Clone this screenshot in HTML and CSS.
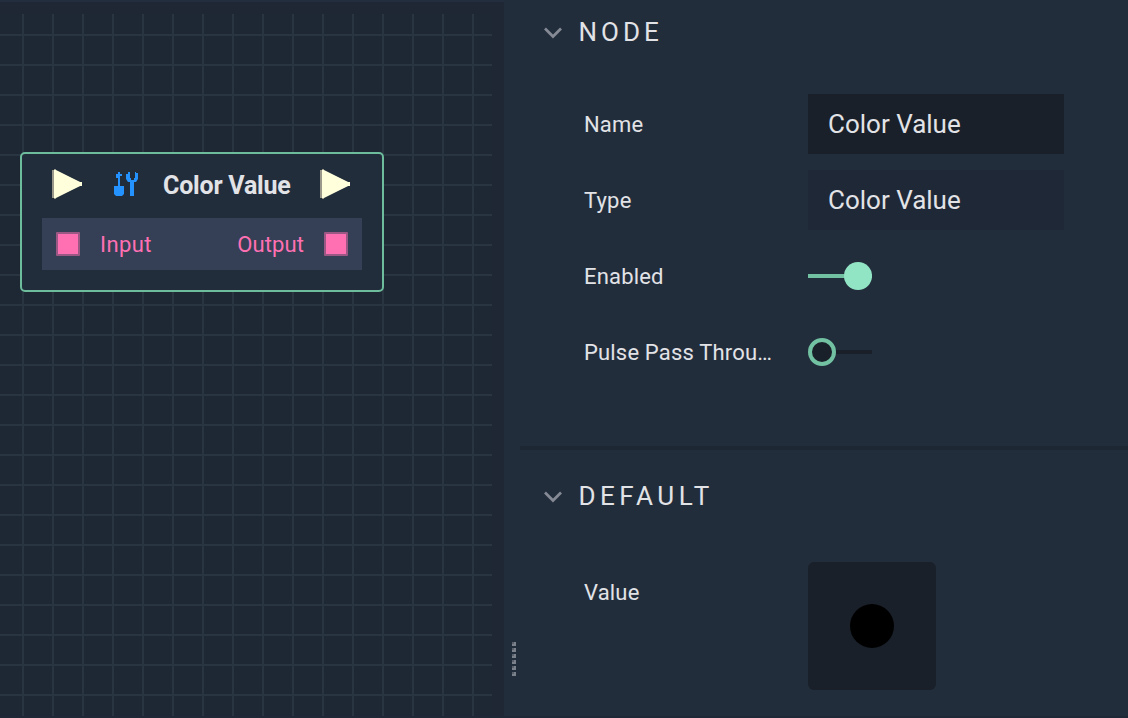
FILE: index.html
```html
<!DOCTYPE html>
<html lang="en">
<head>
<meta charset="utf-8">
<title>Node Editor</title>
<link rel="stylesheet" href="styles.css">
</head>
<body>
<main class="editor">
  <section class="graph">
    <div class="grid">
      <article class="node">
        <header class="node-header">
          <svg class="pulse" width="30" height="32" viewBox="0 0 30 32"><path fill="#99988a" d="M0 2h2V1h2v2l24 11h2v4h-2L4 29v2H2v-1H0z"/><path fill="#ffffdc" d="M2 2h2l24 12h2v4h-2L4 30H2z"/></svg>
          <svg class="tools" width="24" height="24" viewBox="0 0 24 24" fill="#2492ff"><path d="M4 0h2v2h2v2H6v10h4v8l-2 2H2l-2-2v-8h4V6H2V2h2z"/><path d="M14 0h2v6h1v2h3V6h1V0h1v1h2v6l-2 3h-2v14h-4V10h-2l-2-3V2h2z"/></svg>
          <span class="node-title">Color Value</span>
          <svg class="pulse" width="30" height="32" viewBox="0 0 30 32"><path fill="#99988a" d="M0 2h2V1h2v2l24 11h2v4h-2L4 29v2H2v-1H0z"/><path fill="#ffffdc" d="M2 2h2l24 12h2v4h-2L4 30H2z"/></svg>
        </header>
        <div class="ports">
          <span class="pin"></span>
          <span class="port-label input">Input</span>
          <span class="port-label output">Output</span>
          <span class="pin"></span>
        </div>
      </article>
    </div>
  </section>
  <div class="splitter"><div class="grip"><i></i><i></i><i></i><i></i><i></i><i></i></div></div>
  <aside class="panel">
    <section class="group group-node">
      <h2 class="group-title"><svg class="chevron" width="18" height="12" viewBox="0 0 18 12"><path d="M1 1.5l8 8 8-8"/></svg><span class="heading heading-node">NODE</span></h2>
      <div class="row"><span class="label">Name</span><div class="field">Color Value</div></div>
      <div class="row"><span class="label">Type</span><div class="field readonly">Color Value</div></div>
      <div class="row"><span class="label">Enabled</span><div class="toggle on"><b class="knob"></b></div></div>
      <div class="row"><span class="label">Pulse Pass Throu…</span><div class="toggle"><b class="knob"></b></div></div>
    </section>
    <section class="group group-default">
      <h2 class="group-title"><svg class="chevron" width="18" height="12" viewBox="0 0 18 12"><path d="M1 1.5l8 8 8-8"/></svg><span class="heading">DEFAULT</span></h2>
      <div class="row row-value"><span class="label">Value</span><div class="swatch"><b class="color"></b></div></div>
    </section>
  </aside>
</main>
</body>
</html>
```
FILE: styles.css
```css
* { box-sizing: border-box; }
body { margin: 0; font-family: Roboto, "Liberation Sans", sans-serif; color: #e2e3e7; background: #222d3c; }
.editor { display: flex; width: 1128px; height: 718px; overflow: hidden; border-bottom: 2px solid #1f2836; }
.graph { width: 504px; height: 716px; padding: 12px 12px 0 0; border-top: 2px solid #222d3d; background: #1f2734; }
.grid {
  height: 702px; padding: 138px 0 0 20px; background-color: #1e2835;
  background-image: linear-gradient(to right, #293642 2px, transparent 2px), linear-gradient(#293642 2px, transparent 2px);
  background-size: 30px 30px; background-position: 22px 0, 0 20px;
}
.node { width: 364px; height: 140px; border: 2px solid #6dbc9c; border-radius: 5px; background: #222d3c; padding: 14px 20px 0; }
.node-header { display: flex; align-items: center; height: 32px; margin: 0 0 18px; padding-left: 10px; }
.pulse { flex: none; }
.tools { flex: none; margin-left: 32px; }
.node-title { width: 157px; margin-left: 25px; white-space: nowrap; font-size: 25px; font-weight: 700; line-height: 32px; letter-spacing: -.2px; padding-top: 3px; }
.ports { display: flex; align-items: center; height: 52px; padding: 0 14px; background: #354056; color: #ff70b3; }
.pin { flex: none; width: 24px; height: 24px; background: #ff70b3; border: 2px solid #9b5885; border-radius: 1px; }
.port-label { font-size: 22px; line-height: 28px; padding-top: 2px; }
.input { margin-left: 20px; letter-spacing: .4px; }
.output { margin-left: auto; margin-right: 20px; letter-spacing: .1px; }
.splitter { width: 16px; padding: 642px 0 0 8px; }
.grip { display: grid; gap: 2px; }
.grip i { width: 4px; height: 4px; background: linear-gradient(#5b626e, #5b626e) 0 0 / 2px 2px no-repeat #7b818b; }
.panel { width: 608px; }
.group { padding-left: 24px; }
.group-node { height: 446px; padding-top: 12px; }
.group-default { border-top: 4px solid #1d2733; padding-top: 26px; }
.group-title { display: flex; align-items: center; height: 40px; margin: 0; font-size: 26px; font-weight: 400; letter-spacing: 4.5px; }
.group-node .group-title { margin-bottom: 34px; }
.chevron { fill: none; stroke: #858a95; stroke-width: 2.7; margin-top: 2px; }
.heading { margin-left: 16.5px; }
.heading-node { letter-spacing: 4px; }
.row { display: flex; align-items: center; height: 76px; padding-left: 40px; }
.label { width: 224px; padding-top: 2px; font-size: 22px; line-height: 28px; letter-spacing: .17px; white-space: nowrap; }
.field { width: 256px; height: 60px; padding-left: 20px; background: #1a2029; font-size: 26px; line-height: 60px; }
.readonly { background: #1f2836; }
.toggle { display: flex; align-items: center; width: 64px; height: 28px; background: linear-gradient(#1a2029, #1a2029) center / 64px 4px no-repeat; }
.knob { width: 28px; height: 28px; border: 4px solid #71c1a2; border-radius: 50%; background: #1a2029; }
.on { justify-content: flex-end; background-image: linear-gradient(#71c1a2, #71c1a2); }
.on .knob { border: 0; background: #92e5c4; }
.row-value { height: 128px; align-items: flex-start; margin-top: 46px; }
.row-value .label { padding-top: 17px; }
.swatch { display: grid; place-items: center; width: 128px; height: 128px; border-radius: 6px; background: #1a2029; }
.color { width: 44px; height: 44px; border-radius: 50%; background: #000; }
```
